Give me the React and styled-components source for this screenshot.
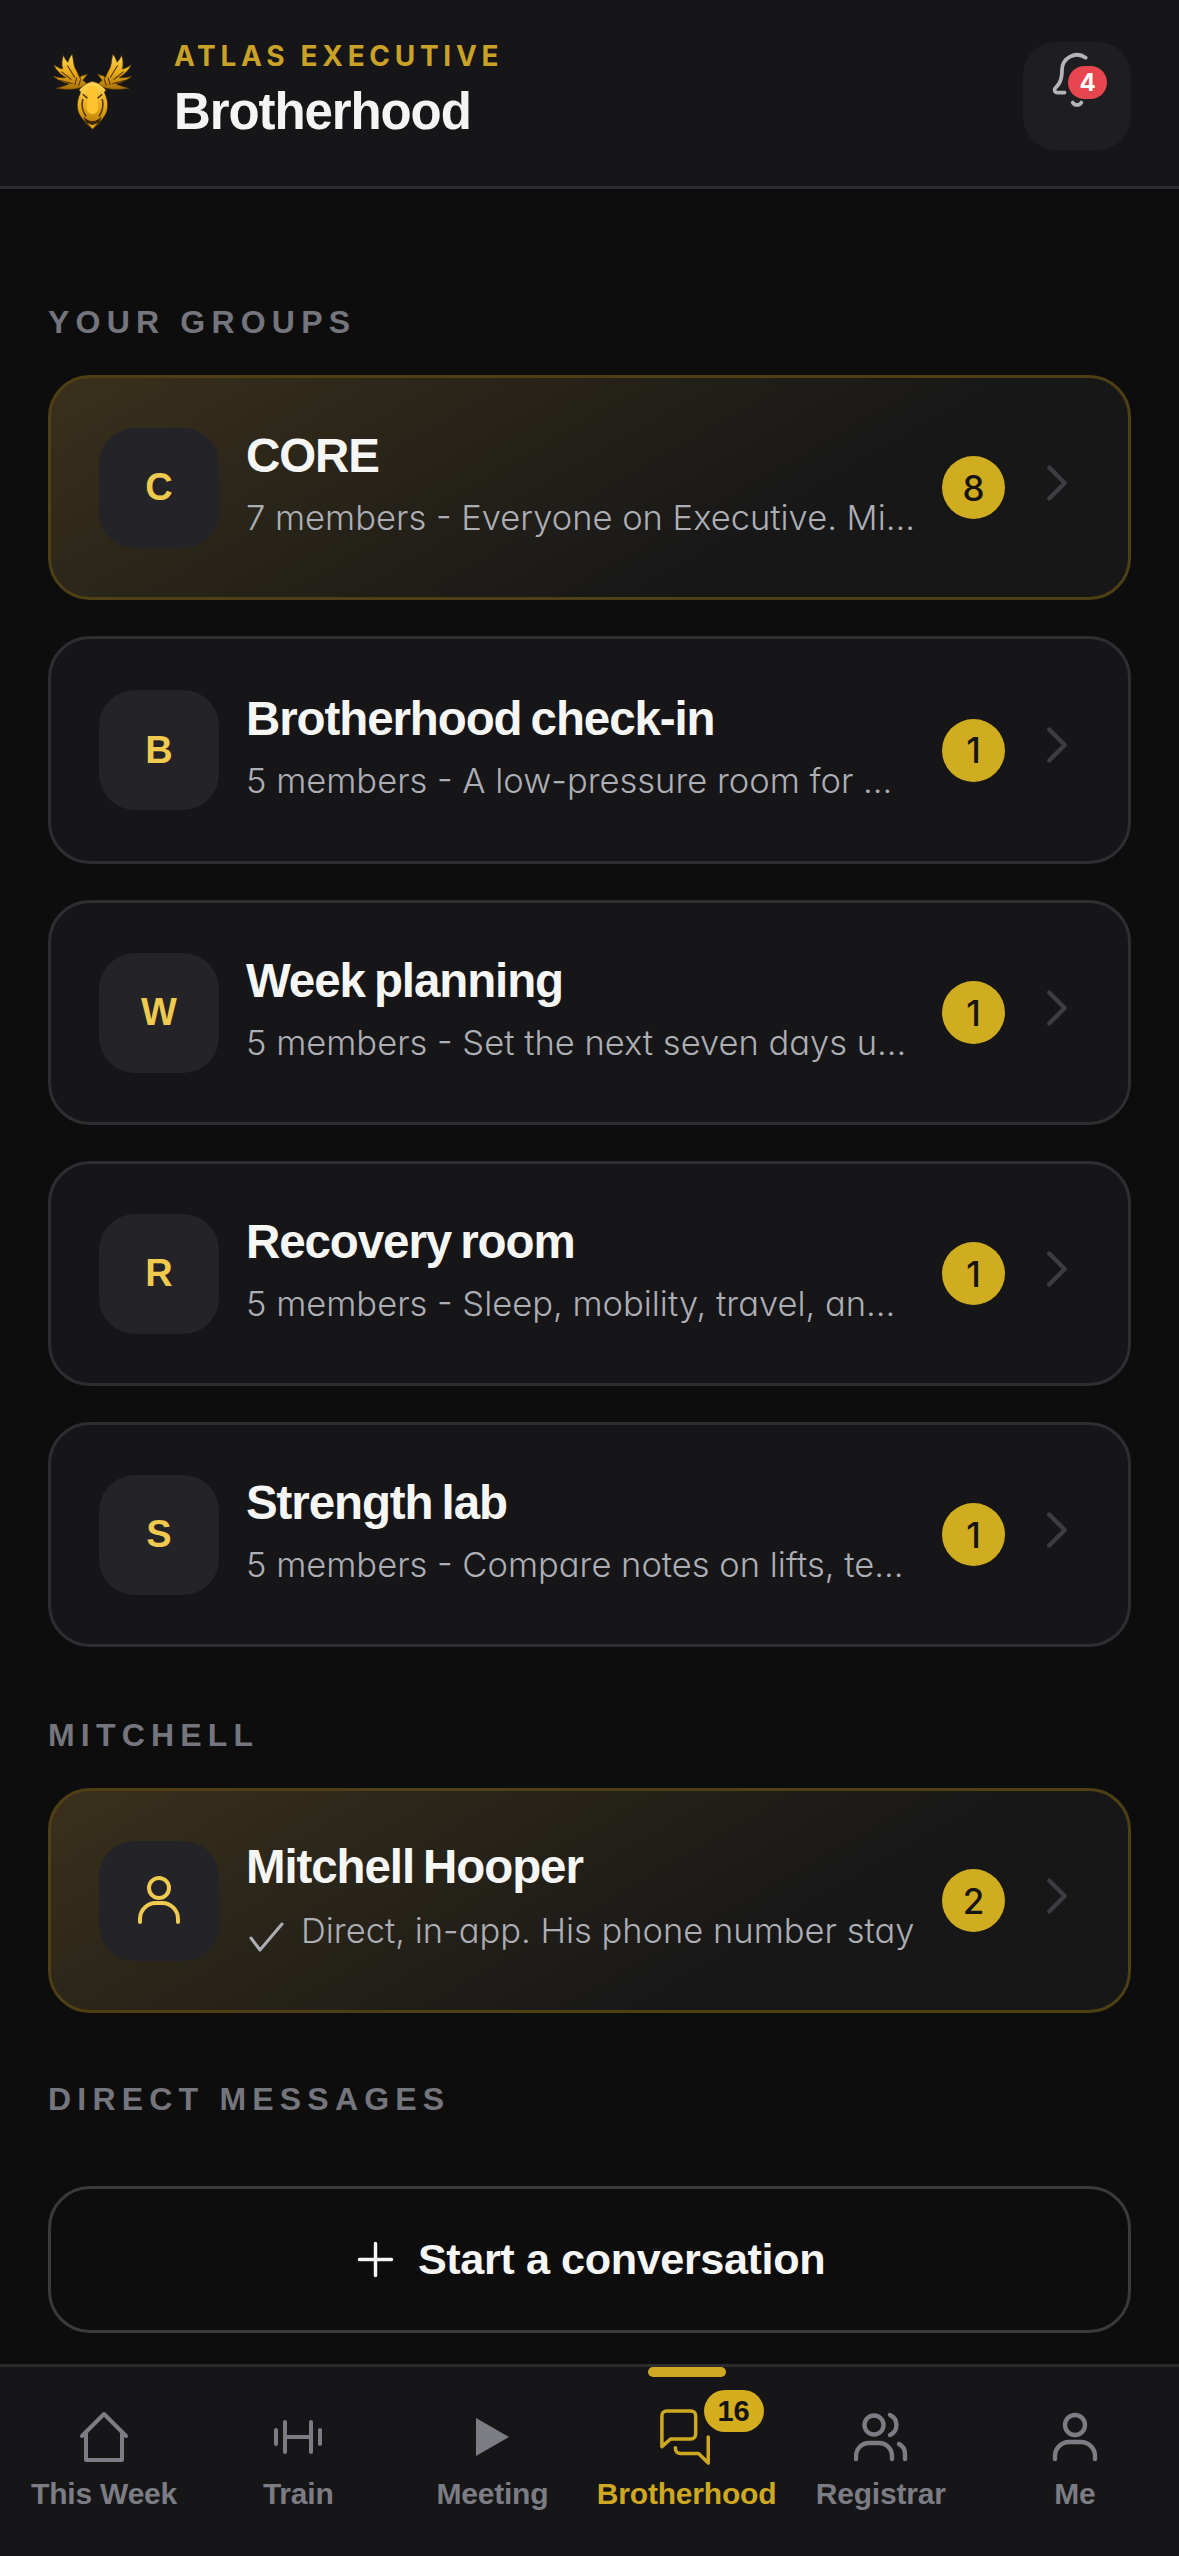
import styled, { createGlobalStyle } from 'styled-components';

const GlobalStyle = createGlobalStyle`
  html, body {
    margin: 0;
    padding: 0;
    background: #0d0d0e;
  }
  * {
    box-sizing: border-box;
  }
`;

const Page = styled.div`
  width: 1179px;
  height: 2556px;
  display: flex;
  flex-direction: column;
  overflow: hidden;
  background: #0d0d0e;
  font-family: 'Liberation Sans', Arial, sans-serif;
`;

const Header = styled.header`
  height: 189px;
  flex: none;
  display: flex;
  align-items: flex-start;
  background: #161618;
  border-bottom: 3px solid #2c2c30;
  padding: 42px 48px 0 52px;
`;

const Logo = styled.svg`
  width: 81px;
  height: 84px;
  flex: none;
  margin: 10px 41px 0 0;
`;

const HeaderText = styled.div`
  flex: 1;
  display: flex;
  flex-direction: column;
`;

const Eyebrow = styled.div`
  font-family: Inter, sans-serif;
  font-weight: 700;
  font-size: 28px;
  line-height: 28px;
  letter-spacing: 4.7px;
  color: #c9a227;
`;

const PageTitle = styled.h1`
  margin: 15px 0 0;
  font-size: 51px;
  line-height: 54px;
  font-weight: 700;
  letter-spacing: -1.1px;
  color: #f4f4f2;
`;

const BellButton = styled.div`
  width: 108px;
  height: 108px;
  flex: none;
  position: relative;
  border-radius: 33px;
  background: #1e1e20;
  color: #b4b4ba;
  padding: 8px 0 0 24px;
`;

const RedBadge = styled.span`
  position: absolute;
  left: 45px;
  top: 24px;
  width: 39px;
  height: 33px;
  display: flex;
  align-items: center;
  justify-content: center;
  border-radius: 17px;
  background: #e8464f;
  color: #fff;
  font-family: Inter, sans-serif;
  font-size: 24px;
  font-weight: 700;
`;

const Main = styled.main`
  flex: 1;
  display: flex;
  flex-direction: column;
  padding: 0 48px;
`;

const SectionLabel = styled.div`
  font-size: 32px;
  line-height: 34px;
  font-weight: 700;
  letter-spacing: 6.2px;
  color: #75757d;
  margin-top: ${props => props.$top}px;
  margin-bottom: ${props => props.$bottom}px;
`;

const CardList = styled.div`
  display: flex;
  flex-direction: column;
  gap: 36px;
`;

const Card = styled.div`
  height: ${props => props.$height || 225}px;
  display: flex;
  align-items: center;
  border-radius: 42px;
  padding: 0 40px 0 48px;
  border: 3px solid ${props => (props.$highlight ? '#4f3f14' : '#2e2e32')};
  background: ${props =>
    props.$highlight
      ? 'linear-gradient(150deg, #3a301c 0%, #2a2519 30%, #171718 68%)'
      : '#161618'};
`;

const Avatar = styled.div`
  width: 120px;
  height: 120px;
  flex: none;
  display: flex;
  align-items: center;
  justify-content: center;
  border-radius: 36px;
  background: #232328;
  color: #f0c94f;
  font-size: 38px;
  font-weight: 700;
`;

const CardText = styled.div`
  flex: 1;
  min-width: 0;
  margin: 0 27px 6px 27px;
  display: flex;
  flex-direction: column;
`;

const CardTitle = styled.div`
  font-size: 47.5px;
  line-height: 52px;
  font-weight: 700;
  letter-spacing: -1.1px;
  word-spacing: -3px;
  color: #f6f6f4;
  white-space: nowrap;
`;

const CardSub = styled.div`
  margin-top: 15px;
  display: flex;
  align-items: center;
  gap: 14px;
  font-family: Inter, sans-serif;
  font-feature-settings: 'cv11';
  font-weight: 300;
  font-size: 34.5px;
  line-height: 42px;
  color: #aeaeb5;
  white-space: nowrap;
  overflow: hidden;
`;

const CheckIcon = styled.svg`
  width: 41px;
  height: 36px;
  flex: none;
  margin-top: 10px;
`;

const CountBadge = styled.div`
  width: 63px;
  height: 63px;
  flex: none;
  display: flex;
  align-items: center;
  justify-content: center;
  border-radius: 50%;
  background: #d0ac20;
  color: #141414;
  font-family: Inter, sans-serif;
  font-size: 35px;
  font-weight: 500;
`;

const Chevron = styled.svg`
  width: 62px;
  height: 62px;
  flex: none;
  margin: 0 0 10px 21px;
  color: #3c3c42;
`;

const StartButton = styled.div`
  height: 147px;
  margin-top: 70px;
  padding-left: 6px;
  display: flex;
  align-items: center;
  justify-content: center;
  gap: 15px;
  border-radius: 42px;
  border: 3px solid #3a3a3e;
  background: #0d0d0e;
  color: #f6f6f4;
  font-size: 43.2px;
  font-weight: 700;
  letter-spacing: -0.4px;
`;

const PlusIcon = styled.svg`
  width: 55px;
  height: 55px;
  margin: 0 0 0 -12px;
`;

const Nav = styled.nav`
  height: 192px;
  flex: none;
  display: grid;
  grid-template-columns: repeat(6, 1fr);
  padding: 0 7px;
  background: #161618;
  border-top: 3px solid #2c2c30;
`;

const NavItem = styled.div`
  position: relative;
  display: flex;
  flex-direction: column;
  align-items: center;
  color: ${props => (props.$active ? '#cfa822' : '#7c7c84')};
`;

const NavIcon = styled.div`
  height: 78px;
  margin-top: 31px;
  display: flex;
  align-items: center;
  justify-content: center;
  position: relative;
`;

const NavLabel = styled.div`
  margin-top: 1px;
  font-size: 30px;
  line-height: 34px;
  font-weight: 700;
  letter-spacing: -0.2px;
  white-space: nowrap;
`;

const ActiveBar = styled.span`
  position: absolute;
  top: 0;
  left: 50%;
  width: 78px;
  height: 10px;
  margin-left: -39px;
  border-radius: 5px;
  background: #cfa822;
`;

const NavBadge = styled.span`
  position: absolute;
  left: 46px;
  top: -8px;
  width: 60px;
  height: 42px;
  display: flex;
  align-items: center;
  justify-content: center;
  border-radius: 21px;
  background: #d4ae1e;
  color: #141414;
  font-size: 29px;
  font-weight: 700;
`;

const groups = [
  { letter: 'C', title: 'CORE', sub: '7 members - Everyone on Executive. Mi...', count: 8, highlight: true },
  { letter: 'B', title: 'Brotherhood check-in', sub: '5 members - A low-pressure room for ...', count: 1, height: 228 },
  { letter: 'W', title: 'Week planning', sub: '5 members - Set the next seven days u...', count: 1 },
  { letter: 'R', title: 'Recovery room', sub: '5 members - Sleep, mobility, travel, an...', count: 1 },
  { letter: 'S', title: 'Strength lab', sub: '5 members - Compare notes on lifts, te...', count: 1 },
];

function ChevronIcon() {
  return (
    <Chevron viewBox="0 0 24 24" fill="none" stroke="currentColor" strokeWidth="1.7" strokeLinecap="round" strokeLinejoin="round">
      <path d="m9 18 6-6-6-6" />
    </Chevron>
  );
}

function MooseLogo() {
  const antler =
    'M172 196 C150 212 115 214 78 208 C95 204 108 200 118 194 C98 192 82 182 70 172 C85 176 98 178 108 176 C92 166 78 154 72 138 C84 146 92 150 98 150 C94 136 96 122 100 110 C106 122 110 128 114 130 C116 122 120 114 126 106 C130 122 130 134 134 146 C142 160 146 172 150 178 L152 172 L172 166 L158 184 Z';
  const antlerGaps = 'M88 184 L128 194 M94 158 L124 182 M112 140 L134 176 M140 176 L134 198 M152 180 L146 200';
  return (
    <Logo viewBox="66 100 242 250">
      <defs>
        <linearGradient id="gold" x1="0" y1="0" x2="0" y2="1">
          <stop offset="0" stopColor="#ffd65c" />
          <stop offset="0.55" stopColor="#e8a913" />
          <stop offset="1" stopColor="#a86e08" />
        </linearGradient>
      </defs>
      <g>
        <path d={antler} fill="url(#gold)" stroke="#5c3d06" strokeWidth="2" />
        <path d={antlerGaps} stroke="#4a3006" strokeWidth="3" fill="none" />
      </g>
      <g transform="translate(374 0) scale(-1 1)">
        <path d={antler} fill="url(#gold)" stroke="#5c3d06" strokeWidth="2" />
        <path d={antlerGaps} stroke="#4a3006" strokeWidth="3" fill="none" />
      </g>
      <path
        d="M187 188 C172 190 160 198 146 214 C150 216 152 218 150 224 C142 240 138 262 146 282 C152 296 162 304 166 312 L187 330 L208 312 C212 304 222 296 228 282 C236 262 232 240 224 224 C222 218 224 216 228 214 C214 198 202 190 187 188Z"
        fill="url(#gold)"
        stroke="#3c2804"
        strokeWidth="2"
      />
      <path d="M158 240 C154 256 156 276 168 292 M216 240 C220 256 218 276 206 292" stroke="#5c3d06" strokeWidth="5" fill="none" />
      <path d="M174 204 C180 198 194 198 200 204 L204 270 C200 290 174 290 170 270 Z" fill="#ffc42e" />
      <path d="M160 292 C170 302 178 306 187 306 C196 306 204 302 214 292 L208 310 L187 326 L166 310Z" fill="#3c2804" />
      <path d="M172 312 L187 318 L202 312 L187 328Z" fill="#e8a913" />
      <path d="M158 226 L172 238 M216 226 L202 238" stroke="#3c2804" strokeWidth="4" />
    </Logo>
  );
}

const navStroke = {
  fill: 'none',
  stroke: 'currentColor',
  strokeLinecap: 'round',
  strokeLinejoin: 'round',
};

const navItems = [
  {
    label: 'This Week',
    icon: (
      <svg width="50" height="52" viewBox="0 0 50 52" {...navStroke} strokeWidth="4">
        <path d="M3 25 L25 3 L47 25" />
        <path d="M7 21 V49 H43 V21" />
      </svg>
    ),
  },
  {
    label: 'Train',
    icon: (
      <svg width="48" height="34" viewBox="0 0 48 34" {...navStroke} strokeWidth="4">
        <path d="M2 10 V24 M11 2 V32 M37 2 V32 M46 10 V24 M11 17 H37" />
      </svg>
    ),
  },
  {
    label: 'Meeting',
    icon: (
      <svg width="33" height="38" viewBox="0 0 33 38">
        <path d="M0 0 L33 19 L0 38 Z" fill="currentColor" />
      </svg>
    ),
  },
  {
    label: 'Brotherhood',
    active: true,
    badge: 16,
    icon: (
      <svg width="58" height="56" viewBox="0 0 58 58" {...navStroke} strokeWidth="3.6">
        <path d="M8 2 H33 A5 5 0 0 1 38 7 V26 A5 5 0 0 1 33 31 H12 L3 39 V7 A5 5 0 0 1 8 2 Z" />
        <path d="M17 40 V41 A5 5 0 0 0 22 46 H41 L51 56 V29" />
      </svg>
    ),
  },
  {
    label: 'Registrar',
    icon: (
      <svg width="54" height="50" viewBox="0 0 54 50" {...navStroke} strokeWidth="4.4">
        <circle cx="20" cy="13" r="9.5" />
        <path d="M2 47 V44 A13 13 0 0 1 15 31 H25 A13 13 0 0 1 38 44 V47" />
        <path d="M36 3 A11 11 0 0 1 36 23" />
        <path d="M45 32 A11 11 0 0 1 51 42 V47" />
      </svg>
    ),
  },
  {
    label: 'Me',
    icon: (
      <svg width="46" height="50" viewBox="0 0 46 50" {...navStroke} strokeWidth="4.4">
        <circle cx="23" cy="13" r="10" />
        <path d="M3 47 V44 A14 14 0 0 1 17 30 H29 A14 14 0 0 1 43 44 V47" />
      </svg>
    ),
  },
];

function App() {
  return (
    <Page>
      <GlobalStyle />
      <Header>
        <MooseLogo />
        <HeaderText>
          <Eyebrow>ATLAS EXECUTIVE</Eyebrow>
          <PageTitle>Brotherhood</PageTitle>
        </HeaderText>
        <BellButton>
          <svg width="60" height="60" viewBox="0 0 24 24" fill="none" stroke="currentColor" strokeWidth="1.5" strokeLinecap="round" strokeLinejoin="round">
            <path d="M10.268 21a2 2 0 0 0 3.464 0" />
            <path d="M7 17H4a1 1 0 0 1-.738-1.674C4.589 13.956 6 12.499 6 8a6 6 0 0 1 9.5-4.9" />
          </svg>
          <RedBadge>4</RedBadge>
        </BellButton>
      </Header>
      <Main>
        <SectionLabel $top={116} $bottom={36}>YOUR GROUPS</SectionLabel>
        <CardList>
          {groups.map((group, index) => {
            return (
              <Card key={index} $highlight={group.highlight} $height={group.height}>
                <Avatar>{group.letter}</Avatar>
                <CardText>
                  <CardTitle>{group.title}</CardTitle>
                  <CardSub>{group.sub}</CardSub>
                </CardText>
                <CountBadge>{group.count}</CountBadge>
                <ChevronIcon />
              </Card>
            );
          })}
        </CardList>
        <SectionLabel $top={71} $bottom={36}>MITCHELL</SectionLabel>
        <Card $highlight>
          <Avatar>
            <svg width="48" height="52" viewBox="0 0 48 52" fill="none" stroke="currentColor" strokeWidth="4" strokeLinecap="round">
              <circle cx="24" cy="13" r="10" />
              <path d="M5 47 V44 A16 16 0 0 1 21 28 H27 A16 16 0 0 1 43 44 V47" />
            </svg>
          </Avatar>
          <CardText>
            <CardTitle>Mitchell Hooper</CardTitle>
            <CardSub>
              <CheckIcon viewBox="0 0 41 36" fill="none" stroke="currentColor" strokeWidth="3" strokeLinecap="round" strokeLinejoin="round">
                <path d="M5 20 L14 32 L36 6" />
              </CheckIcon>
              Direct, in-app. His phone number stay
            </CardSub>
          </CardText>
          <CountBadge>2</CountBadge>
          <ChevronIcon />
        </Card>
        <SectionLabel $top={69} $bottom={0}>DIRECT MESSAGES</SectionLabel>
        <StartButton>
          <PlusIcon viewBox="0 0 24 24" fill="none" stroke="currentColor" strokeWidth="1.5" strokeLinecap="round">
            <path d="M5 12h14M12 5v14" />
          </PlusIcon>
          Start a conversation
        </StartButton>
      </Main>
      <Nav>
        {navItems.map((item, index) => {
          return (
            <NavItem key={index} $active={item.active}>
              {item.active && <ActiveBar />}
              <NavIcon>
                {item.icon}
                {item.badge && <NavBadge>{item.badge}</NavBadge>}
              </NavIcon>
              <NavLabel>{item.label}</NavLabel>
            </NavItem>
          );
        })}
      </Nav>
    </Page>
  );
}

export default App;
